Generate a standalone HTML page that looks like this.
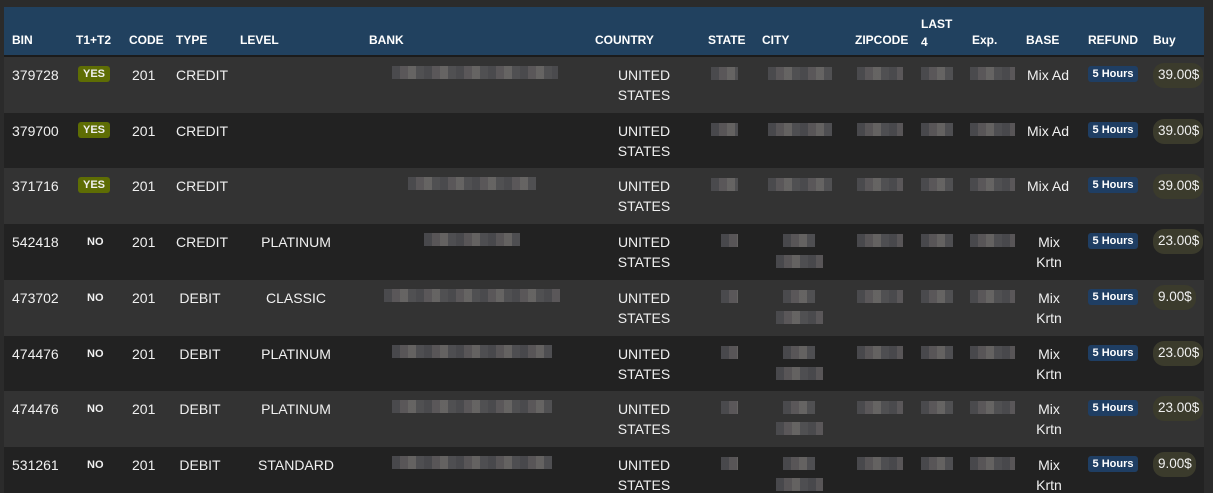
<!DOCTYPE html>
<html style="height:493px;overflow:hidden"><head><style>
body{margin:0;width:1213px;height:493px;background:#2b2b2b;overflow:hidden;font-family:"Liberation Sans",sans-serif;color:#f0f0f0;position:relative}
.h{position:absolute;left:4px;top:7px;width:1200px;height:48px;background:#21415f}
.sep{position:absolute;left:4px;top:55px;width:1200px;height:2px;background:#1b1b1b}
.ht{position:absolute;font-weight:bold;font-size:12px;color:#fff;top:33px}
.r{position:absolute;left:4px;width:1200px;height:56px}
.a{background:#333}.b{background:#222}
.t{position:absolute;font-size:14px;line-height:20px;white-space:nowrap}
.c{text-align:center}
.yes{position:absolute;width:32px;height:16px;background:#5e6d04;border-radius:3px;font-size:11px;font-weight:bold;text-align:center;line-height:16px}
.no{position:absolute;font-size:11px;font-weight:bold}
.rf{position:absolute;width:50px;height:16px;background:#1f3e63;border-radius:3px;font-size:11px;font-weight:bold;text-align:center;line-height:16px;color:#fff}
.buy{position:absolute;height:25px;background:#3b3b2c;border-radius:11px;font-size:13.5px;line-height:23px;padding:0 4px 0 5px}
.bl{position:absolute;height:13px;background:repeating-linear-gradient(90deg,#4c4c50 0 8px,#5e5b5d 8px 16px,#6b6968 16px 24px,#535356 24px 32px);opacity:.9}
</style></head><body>
<div class="h"></div><div class="sep"></div>
<div class="ht" style="left:12px">BIN</div><div class="ht" style="left:76px">T1+T2</div><div class="ht" style="left:129px">CODE</div><div class="ht" style="left:176px">TYPE</div><div class="ht" style="left:240px">LEVEL</div><div class="ht" style="left:369px">BANK</div><div class="ht" style="left:595px">COUNTRY</div><div class="ht" style="left:708px">STATE</div><div class="ht" style="left:762px">CITY</div><div class="ht" style="left:855px">ZIPCODE</div><div class="ht" style="left:921px;top:15px;line-height:18px">LAST<br>4</div><div class="ht" style="left:972px">Exp.</div><div class="ht" style="left:1026px">BASE</div><div class="ht" style="left:1088px">REFUND</div><div class="ht" style="left:1153px">Buy</div>

<div class="r a" style="top:57px"></div>
<div class="r b" style="top:113px"></div>
<div class="r a" style="top:168px"></div>
<div class="r b" style="top:224px"></div>
<div class="r a" style="top:280px"></div>
<div class="r b" style="top:336px"></div>
<div class="r a" style="top:391px"></div>
<div class="r b" style="top:447px"></div>

<div class="t" style="left:12px;top:65px">379728</div><div class="yes" style="left:78px;top:66px">YES</div><div class="t" style="left:132px;top:65px">201</div><div class="t" style="left:176px;top:65px">CREDIT</div>
<div class="bl" style="left:392px;top:66px;width:166px"></div>
<div class="t c" style="left:594px;width:100px;top:65px">UNITED<br>STATES</div>
<div class="bl" style="left:711px;top:67px;width:27px"></div><div class="bl" style="left:768px;top:67px;width:64px"></div><div class="bl" style="left:857px;top:67px;width:46px"></div><div class="bl" style="left:921px;top:67px;width:32px"></div><div class="bl" style="left:970px;top:67px;width:45px"></div>
<div class="t" style="left:1027px;top:65px">Mix Ad</div><div class="rf" style="left:1088px;top:66px">5 Hours</div><div class="buy" style="left:1153px;top:63px">39.00$</div>

<div class="t" style="left:12px;top:121px">379700</div><div class="yes" style="left:78px;top:122px">YES</div><div class="t" style="left:132px;top:121px">201</div><div class="t" style="left:176px;top:121px">CREDIT</div>
<div class="t c" style="left:594px;width:100px;top:121px">UNITED<br>STATES</div>
<div class="bl" style="left:711px;top:123px;width:27px"></div><div class="bl" style="left:768px;top:123px;width:64px"></div><div class="bl" style="left:857px;top:123px;width:46px"></div><div class="bl" style="left:921px;top:123px;width:32px"></div><div class="bl" style="left:970px;top:123px;width:45px"></div>
<div class="t" style="left:1027px;top:121px">Mix Ad</div><div class="rf" style="left:1088px;top:122px">5 Hours</div><div class="buy" style="left:1153px;top:119px">39.00$</div>

<div class="t" style="left:12px;top:176px">371716</div><div class="yes" style="left:78px;top:177px">YES</div><div class="t" style="left:132px;top:176px">201</div><div class="t" style="left:176px;top:176px">CREDIT</div>
<div class="bl" style="left:408px;top:177px;width:128px"></div>
<div class="t c" style="left:594px;width:100px;top:176px">UNITED<br>STATES</div>
<div class="bl" style="left:711px;top:178px;width:27px"></div><div class="bl" style="left:768px;top:178px;width:64px"></div><div class="bl" style="left:857px;top:178px;width:46px"></div><div class="bl" style="left:921px;top:178px;width:32px"></div><div class="bl" style="left:970px;top:178px;width:45px"></div>
<div class="t" style="left:1027px;top:176px">Mix Ad</div><div class="rf" style="left:1088px;top:177px">5 Hours</div><div class="buy" style="left:1153px;top:174px">39.00$</div>

<div class="t" style="left:12px;top:232px">542418</div><div class="no" style="left:87px;top:236px">NO</div><div class="t" style="left:132px;top:232px">201</div><div class="t" style="left:176px;top:232px">CREDIT</div><div class="t c" style="left:246px;width:100px;top:232px">PLATINUM</div>
<div class="bl" style="left:424px;top:233px;width:96px"></div>
<div class="t c" style="left:594px;width:100px;top:232px">UNITED<br>STATES</div>
<div class="bl" style="left:721px;top:234px;width:17px"></div><div class="bl" style="left:783px;top:234px;width:32px"></div><div class="bl" style="left:776px;top:255px;width:47px"></div><div class="bl" style="left:857px;top:234px;width:46px"></div><div class="bl" style="left:921px;top:234px;width:32px"></div><div class="bl" style="left:970px;top:234px;width:45px"></div>
<div class="t c" style="left:1024px;width:50px;top:232px">Mix<br>Krtn</div><div class="rf" style="left:1088px;top:233px">5 Hours</div><div class="buy" style="left:1153px;top:229px">23.00$</div>

<div class="t" style="left:12px;top:288px">473702</div><div class="no" style="left:87px;top:292px">NO</div><div class="t" style="left:132px;top:288px">201</div><div class="t c" style="left:160px;width:80px;top:288px">DEBIT</div><div class="t c" style="left:246px;width:100px;top:288px">CLASSIC</div>
<div class="bl" style="left:384px;top:289px;width:176px"></div>
<div class="t c" style="left:594px;width:100px;top:288px">UNITED<br>STATES</div>
<div class="bl" style="left:721px;top:290px;width:17px"></div><div class="bl" style="left:783px;top:290px;width:32px"></div><div class="bl" style="left:776px;top:311px;width:47px"></div><div class="bl" style="left:857px;top:290px;width:46px"></div><div class="bl" style="left:921px;top:290px;width:32px"></div><div class="bl" style="left:970px;top:290px;width:45px"></div>
<div class="t c" style="left:1024px;width:50px;top:288px">Mix<br>Krtn</div><div class="rf" style="left:1088px;top:289px">5 Hours</div><div class="buy" style="left:1153px;top:285px">9.00$</div>

<div class="t" style="left:12px;top:344px">474476</div><div class="no" style="left:87px;top:348px">NO</div><div class="t" style="left:132px;top:344px">201</div><div class="t c" style="left:160px;width:80px;top:344px">DEBIT</div><div class="t c" style="left:246px;width:100px;top:344px">PLATINUM</div>
<div class="bl" style="left:392px;top:345px;width:160px"></div>
<div class="t c" style="left:594px;width:100px;top:344px">UNITED<br>STATES</div>
<div class="bl" style="left:721px;top:346px;width:17px"></div><div class="bl" style="left:783px;top:346px;width:32px"></div><div class="bl" style="left:776px;top:367px;width:47px"></div><div class="bl" style="left:857px;top:346px;width:46px"></div><div class="bl" style="left:921px;top:346px;width:32px"></div><div class="bl" style="left:970px;top:346px;width:45px"></div>
<div class="t c" style="left:1024px;width:50px;top:344px">Mix<br>Krtn</div><div class="rf" style="left:1088px;top:345px">5 Hours</div><div class="buy" style="left:1153px;top:341px">23.00$</div>

<div class="t" style="left:12px;top:399px">474476</div><div class="no" style="left:87px;top:403px">NO</div><div class="t" style="left:132px;top:399px">201</div><div class="t c" style="left:160px;width:80px;top:399px">DEBIT</div><div class="t c" style="left:246px;width:100px;top:399px">PLATINUM</div>
<div class="bl" style="left:392px;top:400px;width:160px"></div>
<div class="t c" style="left:594px;width:100px;top:399px">UNITED<br>STATES</div>
<div class="bl" style="left:721px;top:401px;width:17px"></div><div class="bl" style="left:783px;top:401px;width:32px"></div><div class="bl" style="left:776px;top:422px;width:47px"></div><div class="bl" style="left:857px;top:401px;width:46px"></div><div class="bl" style="left:921px;top:401px;width:32px"></div><div class="bl" style="left:970px;top:401px;width:45px"></div>
<div class="t c" style="left:1024px;width:50px;top:399px">Mix<br>Krtn</div><div class="rf" style="left:1088px;top:400px">5 Hours</div><div class="buy" style="left:1153px;top:396px">23.00$</div>

<div class="t" style="left:12px;top:455px">531261</div><div class="no" style="left:87px;top:459px">NO</div><div class="t" style="left:132px;top:455px">201</div><div class="t c" style="left:160px;width:80px;top:455px">DEBIT</div><div class="t c" style="left:246px;width:100px;top:455px">STANDARD</div>
<div class="bl" style="left:392px;top:456px;width:160px"></div>
<div class="t c" style="left:594px;width:100px;top:455px">UNITED<br>STATES</div>
<div class="bl" style="left:721px;top:457px;width:17px"></div><div class="bl" style="left:783px;top:457px;width:32px"></div><div class="bl" style="left:776px;top:478px;width:47px"></div><div class="bl" style="left:857px;top:457px;width:46px"></div><div class="bl" style="left:921px;top:457px;width:32px"></div><div class="bl" style="left:970px;top:457px;width:45px"></div>
<div class="t c" style="left:1024px;width:50px;top:455px">Mix<br>Krtn</div><div class="rf" style="left:1088px;top:456px">5 Hours</div><div class="buy" style="left:1153px;top:452px">9.00$</div>
</body></html>
